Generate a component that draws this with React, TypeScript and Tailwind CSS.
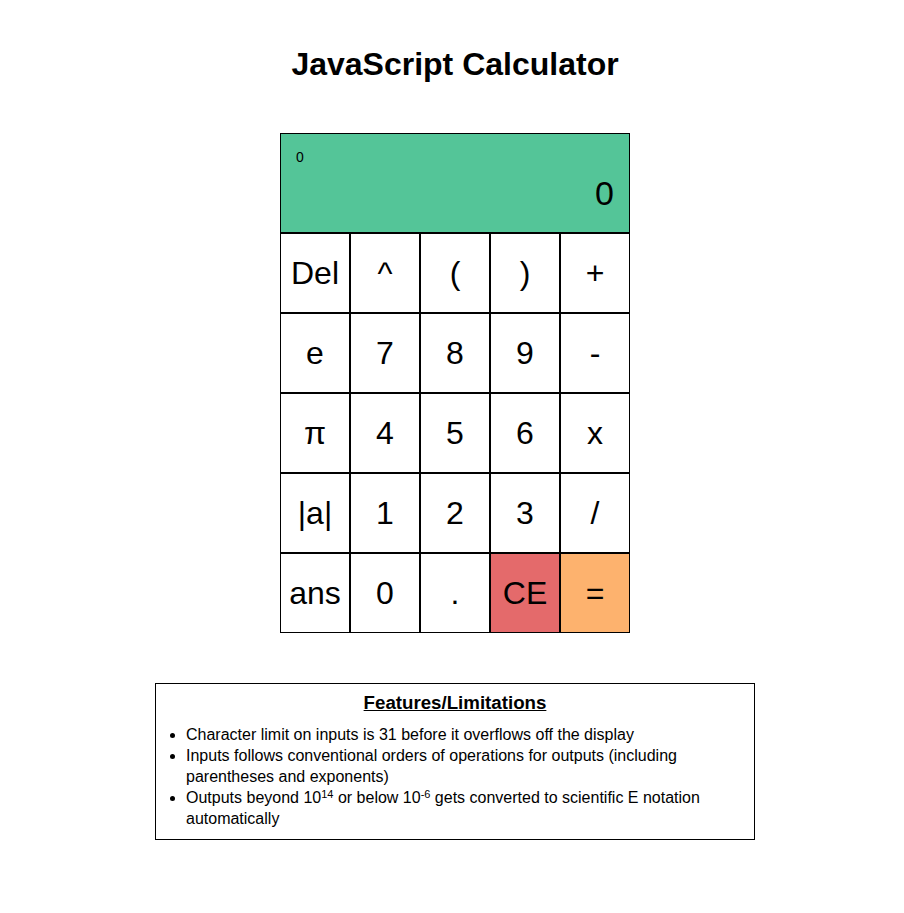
import React, { useState } from "react"

const keys: { label: string; tone?: string }[] = [
  { label: "Del" }, { label: "^" }, { label: "(" }, { label: ")" }, { label: "+" },
  { label: "e" }, { label: "7" }, { label: "8" }, { label: "9" }, { label: "-" },
  { label: "π" }, { label: "4" }, { label: "5" }, { label: "6" }, { label: "x" },
  { label: "|a|" }, { label: "1" }, { label: "2" }, { label: "3" }, { label: "/" },
  { label: "ans" }, { label: "0" }, { label: "." }, { label: "CE", tone: "red" }, { label: "=", tone: "orange" },
]

export default function App() {
  const [input] = useState("0")
  const [output] = useState("0")

  return (
    <div className="min-h-screen bg-white pl-[6px] font-['Liberation_Sans',Arial,sans-serif] text-black flex flex-col items-center">
      <h1 className="mt-[44px] text-[32px] leading-[40px] font-bold">JavaScript Calculator</h1>

      <div className="mt-[49px] w-[350px]">
        <div className="h-[100px] bg-[#54c598] border border-black px-[15px] flex flex-col">
          <div className="pt-[15px] text-[14px] leading-[16px]">{input}</div>
          <div className="mt-[8px] text-right text-[34px] leading-[40px]">{output}</div>
        </div>
        <div className="grid grid-cols-5">
          {keys.map(k => (
            <button
              key={k.label}
              className={
                "h-[80px] border border-black text-[32px] flex items-center justify-center " +
                (k.tone === "red" ? "bg-[#e46a6b]" : k.tone === "orange" ? "bg-[#fdb26e]" : "bg-white")
              }
            >
              {k.label}
            </button>
          ))}
        </div>
      </div>

      <div className="mt-[50px] w-[600px] border border-black pt-[8px] pb-[10px]">
        <h2 className="text-center text-[18.7px] leading-[22px] font-bold underline">Features/Limitations</h2>
        <ul className="mt-[10px] list-disc pl-[30px] pr-[20px] text-[16px] leading-[21px]">
          <li>Character limit on inputs is 31 before it overflows off the display</li>
          <li>Inputs follows conventional orders of operations for outputs (including parentheses and exponents)</li>
          <li>
            Outputs beyond 10<sup className="text-[11px] leading-[0]">14</sup> or below 10<sup className="text-[11px] leading-[0]">-6</sup> gets converted to scientific E notation automatically
          </li>
        </ul>
      </div>
    </div>
  )
}
